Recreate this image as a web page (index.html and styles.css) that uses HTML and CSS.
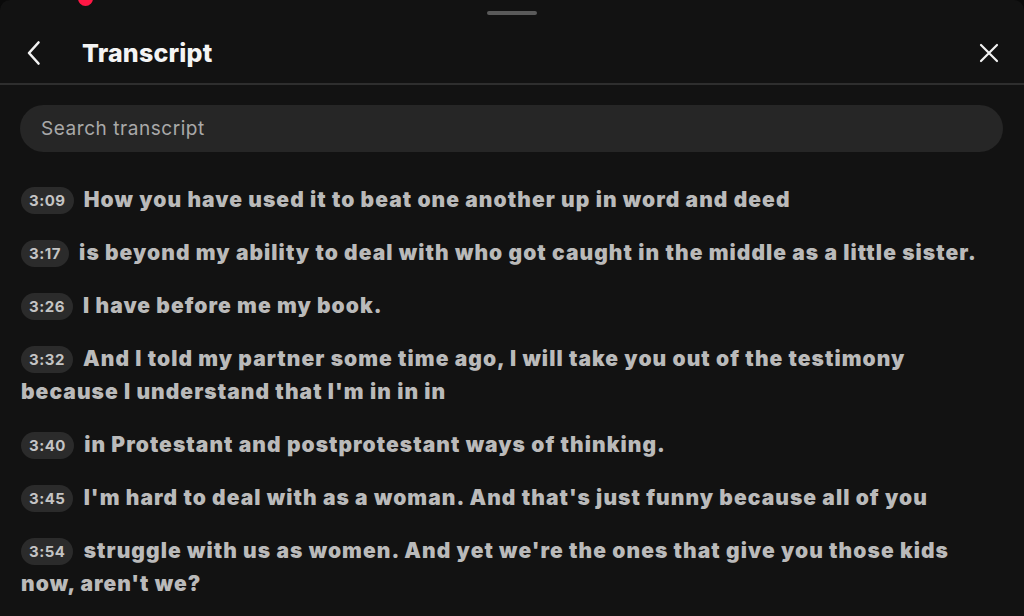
FILE: index.html
```html
<!DOCTYPE html>
<html lang="en">
<head>
<meta charset="utf-8">
<title>Transcript</title>
<link rel="stylesheet" href="styles.css">
</head>
<body>
<div class="sheet">
  <span class="dot"></span>
  <div class="handle"></div>
  <header class="header">
    <button class="icon-btn back" aria-label="Back">
      <svg width="16" height="26" viewBox="0 0 16 26"><path d="M12.5 2.5 L3 13 L12.5 23.5" fill="none" stroke="#f2f2f2" stroke-width="2.6" stroke-linecap="round" stroke-linejoin="round"/></svg>
    </button>
    <h1 class="title">Transcript</h1>
    <button class="icon-btn close" aria-label="Close">
      <svg width="20" height="20" viewBox="0 0 20 20"><path d="M2 2 L18 18 M18 2 L2 18" fill="none" stroke="#f2f2f2" stroke-width="2.2" stroke-linecap="round"/></svg>
    </button>
  </header>
  <div class="search">Search transcript</div>
  <ul class="lines">
    <li><span class="ts">3:09</span> How you have used it to beat one another up in word and deed</li>
    <li><span class="ts">3:17</span> is beyond my ability to deal with who got caught in the middle as a little sister.</li>
    <li><span class="ts">3:26</span> I have before me my book.</li>
    <li><span class="ts">3:32</span> And I told my partner some time ago, I will take you out of the testimony because I understand that I'm in in in</li>
    <li><span class="ts">3:40</span> in Protestant and postprotestant ways of thinking.</li>
    <li><span class="ts">3:45</span> I'm hard to deal with as a woman. And that's just funny because all of you</li>
    <li><span class="ts">3:54</span> struggle with us as women. And yet we're the ones that give you those kids now, aren't we?</li>
  </ul>
</div>
</body>
</html>
```
FILE: styles.css
```css
* { box-sizing: border-box; }
html, body { margin: 0; padding: 0; background: #0a0a0a; height: 100%; overflow: hidden; }
body { font-family: Inter, "Noto Sans", sans-serif; }
.sheet {
  position: relative;
  background: #121212;
  border-radius: 10px 10px 0 0;
  height: 616px;
  padding: 0 21px 0 20px;
}
.dot {
  position: absolute;
  left: 78px; top: -9px;
  width: 15px; height: 15px;
  border-radius: 50%;
  background: #ff1744;
}
.handle {
  width: 50px; height: 4px;
  border-radius: 2px;
  background: #5a5a5a;
  margin: 0 auto;
  position: relative; top: 11px;
}
.header {
  display: flex;
  align-items: center;
  height: 62px;
  margin: 19px -21px 0 -20px;
  padding: 0 20px 0 26px;
  border-bottom: 2px solid #2e2e2e;
}
.icon-btn { background: none; border: 0; padding: 0; display: flex; align-items: center; }
.back { width: 56px; }
.title {
  margin: 0;
  color: #f4f4f4;
  font-size: 25px;
  font-weight: 800;
  letter-spacing: 0.2px;
  flex: 1;
}
.close { margin-right: 5px; }
.search {
  margin-top: 20px;
  height: 47px;
  border-radius: 24px;
  background: #262626;
  color: #a9a9a9;
  font-size: 19px;
  letter-spacing: 0.55px;
  display: flex;
  align-items: center;
  padding-left: 21px;
}
.lines {
  list-style: none;
  margin: 31px 0 0;
  padding: 0 20px 0 1px;
  display: flex;
  flex-direction: column;
  gap: 20px;
}
.lines li {
  color: #bababa;
  font-size: 21px;
  font-weight: 900;
  line-height: 33px;
  letter-spacing: 1.05px;
}
.ts {
  display: inline-block;
  vertical-align: 1px;
  background: #2b2b2b;
  color: #c4c4c4;
  font-size: 15px;
  font-weight: 700;
  line-height: 27px;
  height: 27px;
  padding: 0 8px;
  border-radius: 14px;
  letter-spacing: 0.5px;
  margin-right: 5px;
}
```
